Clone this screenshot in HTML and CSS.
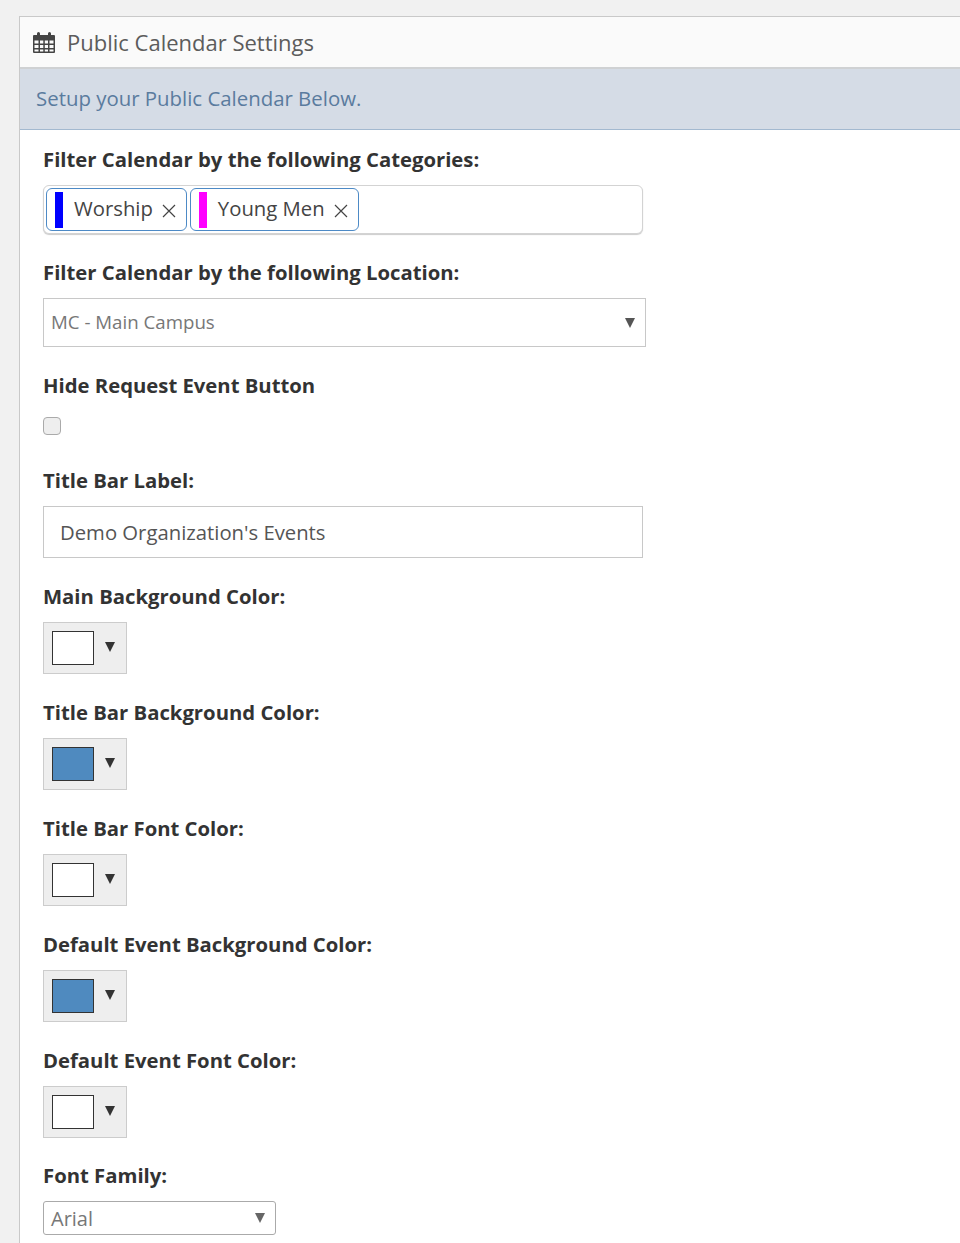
FILE: index.html
```html
<!DOCTYPE html>
<html lang="en">

<head>
    <meta charset="UTF-8">
    <title>Public Calendar Settings</title>
    <link rel="stylesheet" href="styles.css">
</head>

<body>
    <div class="panel">
        <div class="panel_head">
            <svg class="cal_icon" width="24" height="24" viewBox="0 0 24 24">
                <path fill="#444" fill-rule="evenodd" d="M2 4h3V2.500a1.500 1.500 0 0 1 3 0V4h8V2.500a1.500 1.500 0 0 1 3 0V4h3a1 1 0 0 1 1 1v16a1 1 0 0 1-1 1H2a1 1 0 0 1-1-1V5a1 1 0 0 1 1-1zM2.500 9.500v3h4v-3zm5.500 0v3h3.300v-3zm4.800 0v3H16v-3zm4.700 0v3h4v-3zM2.500 14v3h4v-3zm5.500 0v3h3.300v-3zm4.800 0v3H16v-3zm4.700 0v3h4v-3zM2.500 18.500v2h4v-2zm5.500 0v2h3.300v-2zm4.800 0v2H16v-2zm4.700 0v2h4v-2z"/>
            </svg>
            <span class="panel_title">Public Calendar Settings</span>
        </div>
        <div class="panel_note">Setup your Public Calendar Below.</div>

        <form class="panel_body">
            <div class="form-group group_tags">
                <div class="all_label">Filter Calendar by the following Categories:</div>
                <div class="tag_box">
                    <span class="tag"><i class="swatch swatch_blue"></i><span class="tag_name">Worship</span>
                        <svg class="tag_x" width="14" height="14" viewBox="0 0 14 14"><path d="M1 1l12 12M13 1L1 13" stroke="#444" stroke-width="1.200" fill="none"/></svg>
                    </span>
                    <span class="tag"><i class="swatch swatch_pink"></i><span class="tag_name">Young Men</span>
                        <svg class="tag_x" width="14" height="14" viewBox="0 0 14 14"><path d="M1 1l12 12M13 1L1 13" stroke="#444" stroke-width="1.200" fill="none"/></svg>
                    </span>
                </div>
            </div>

            <div class="form-group group_location">
                <div class="all_label">Filter Calendar by the following Location:</div>
                <div class="select_box select_big">
                    <span class="select_text">MC - Main Campus</span>
                    <svg width="10" height="10" viewBox="0 0 10 10"><path d="M0 0h10L5 10z" fill="#555"/></svg>
                </div>
            </div>

            <div class="form-group group_hide">
                <div class="all_label">Hide Request Event Button</div>
                <div class="check_box"></div>
            </div>

            <div class="form-group group_title">
                <div class="all_label">Title Bar Label:</div>
                <input class="text_box" type="text" value="Demo Organization's Events">
            </div>

            <div class="form-group group_color">
                <div class="all_label">Main Background Color:</div>
                <div class="color_btn"><i class="color_chip"></i><svg width="10" height="10" viewBox="0 0 10 10"><path d="M0 0h10L5 10z" fill="#333"/></svg></div>
            </div>

            <div class="form-group group_color">
                <div class="all_label">Title Bar Background Color:</div>
                <div class="color_btn"><i class="color_chip chip_blue"></i><svg width="10" height="10" viewBox="0 0 10 10"><path d="M0 0h10L5 10z" fill="#333"/></svg></div>
            </div>

            <div class="form-group group_color">
                <div class="all_label">Title Bar Font Color:</div>
                <div class="color_btn"><i class="color_chip"></i><svg width="10" height="10" viewBox="0 0 10 10"><path d="M0 0h10L5 10z" fill="#333"/></svg></div>
            </div>

            <div class="form-group group_color">
                <div class="all_label">Default Event Background Color:</div>
                <div class="color_btn"><i class="color_chip chip_blue"></i><svg width="10" height="10" viewBox="0 0 10 10"><path d="M0 0h10L5 10z" fill="#333"/></svg></div>
            </div>

            <div class="form-group group_color_last">
                <div class="all_label">Default Event Font Color:</div>
                <div class="color_btn"><i class="color_chip"></i><svg width="10" height="10" viewBox="0 0 10 10"><path d="M0 0h10L5 10z" fill="#333"/></svg></div>
            </div>

            <div class="form-group">
                <div class="all_label">Font Family:</div>
                <div class="select_box select_small">
                    <span>Arial</span>
                    <svg width="10" height="10" viewBox="0 0 10 10"><path d="M0 0h10L5 10z" fill="#666"/></svg>
                </div>
            </div>
        </form>
    </div>
</body>

</html>
```

FILE: styles.css
```css
html,
body {
    height: 100%;
}

body {
    margin: 0;
    padding: 16px 0 0 19px;
    box-sizing: border-box;
    overflow: hidden;
    background-color: #f1f1f1;
    font-family: "Open Sans", sans-serif;
    color: #444;
}

.panel {
    height: 100%;
    box-sizing: border-box;
    background-color: #fff;
    border-left: 1px solid #c9c9c9;
    border-top: 1px solid #c9c9c9;
}

.panel_head {
    display: flex;
    align-items: center;
    height: 50px;
    padding-left: 12px;
    background-color: #fafafa;
    border-bottom: 2px solid #cfd1d3;
}

.cal_icon {
    margin: 2px 11px 0 0;
}

.panel_title {
    font-size: 22px;
    color: #5c5c5c;
}

.panel_note {
    height: 60px;
    line-height: 58px;
    padding-left: 16px;
    font-size: 20.400px;
    color: #5a7b9e;
    background-color: #d5dce6;
    border-bottom: 1px solid #a3b9d0;
}

.panel_body {
    padding: 15px 0 0 23px;
}

.all_label {
    height: 28px;
    line-height: 28px;
    font-size: 20.300px;
    font-weight: 700;
    color: #333;
}

.group_tags {
    height: 113px;
}

.group_location {
    height: 113px;
}

.group_hide {
    height: 95px;
}

.group_title {
    height: 116px;
}

.group_color {
    height: 116px;
}

.group_color_last {
    height: 115px;
}

.tag_box {
    display: flex;
    align-items: center;
    gap: 3px;
    width: 600px;
    height: 49px;
    margin-top: 12px;
    padding-left: 2px;
    box-sizing: border-box;
    background-color: #fff;
    border: 1px solid #d3d3d3;
    border-radius: 6px;
    box-shadow: 0 1px 1px #ccc;
}

.tag {
    display: flex;
    align-items: center;
    height: 43px;
    padding: 0 10px 0 8px;
    box-sizing: border-box;
    border: 1px solid #4d8ac6;
    border-radius: 6px;
    background-color: #fff;
}

.swatch {
    width: 8px;
    height: 36px;
    margin-right: 11px;
}

.swatch_blue {
    background-color: #0000ff;
}

.swatch_pink {
    background-color: #ff00ff;
}

.tag_name {
    margin-bottom: 4px;
    font-size: 20.300px;
    color: #444;
}

.tag_x {
    margin: 3px 0 0 9px;
}

.select_box {
    display: flex;
    align-items: center;
    justify-content: space-between;
    box-sizing: border-box;
    background-color: #fff;
    border: 1px solid #c8c8c8;
    color: #777;
}

.select_big {
    width: 603px;
    height: 49px;
    margin-top: 12px;
    padding: 0 10px 0 7px;
    font-size: 18.700px;
}

.select_text {
    margin-bottom: 2px;
}

.select_small {
    width: 233px;
    height: 34px;
    margin-top: 12px;
    padding: 0 10px 0 7px;
    font-size: 20px;
    border-color: #aaa;
    border-radius: 3px;
}

.check_box {
    width: 18px;
    height: 18px;
    margin-top: 18px;
    box-sizing: border-box;
    background-color: #eee;
    border: 1px solid #aaa;
    border-radius: 4px;
}

.text_box {
    display: block;
    width: 600px;
    height: 52px;
    margin: 12px 0 0;
    padding: 0 0 0 16px;
    box-sizing: border-box;
    font-family: "Open Sans", sans-serif;
    font-size: 20.300px;
    color: #555;
    border: 1px solid #c8c8c8;
    border-radius: 0;
}

.color_btn {
    display: flex;
    align-items: center;
    width: 84px;
    height: 52px;
    margin-top: 12px;
    box-sizing: border-box;
    padding-left: 8px;
    background-color: #eee;
    border: 1px solid #ccc;
}

.color_btn svg {
    margin: -3px 0 0 11px;
}

.color_chip {
    width: 42px;
    height: 34px;
    box-sizing: border-box;
    background-color: #fff;
    border: 1.500px solid #333;
}

.chip_blue {
    background-color: #4f8abf;
}
```
